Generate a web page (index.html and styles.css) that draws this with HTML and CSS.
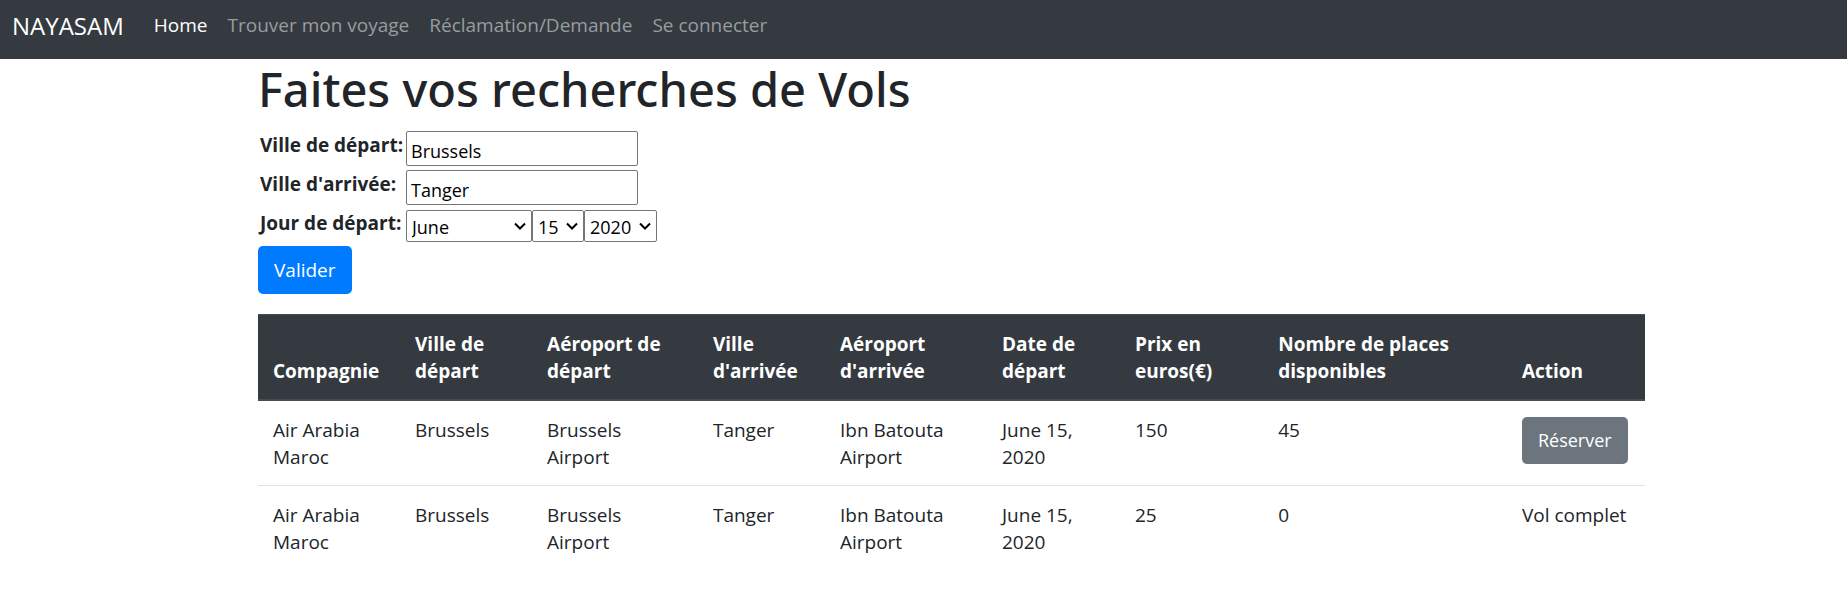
FILE: index.html
```html
<!DOCTYPE html>
<html lang="fr">
<head>
<meta charset="utf-8">
<meta name="viewport" content="width=device-width, initial-scale=1">
<title>NAYASAM</title>
<link rel="stylesheet" href="styles.css">
</head>
<body>
<nav class="navbar">
  <a class="brand" href="#">NAYASAM</a>
  <ul class="nav-list">
    <li><a class="nav-link active" href="#">Home</a></li>
    <li><a class="nav-link" href="#">Trouver mon voyage</a></li>
    <li><a class="nav-link" href="#">Réclamation/Demande</a></li>
    <li><a class="nav-link" href="#">Se connecter</a></li>
  </ul>
</nav>
<main class="content">
  <h1 class="title">Faites vos recherches de Vols</h1>
  <form class="search">
    <div class="fields">
      <label class="label" for="from">Ville de départ:</label>
      <input class="text-input" id="from" type="text" value="Brussels">
      <label class="label" for="to">Ville d'arrivée:</label>
      <input class="text-input" id="to" type="text" value="Tanger">
      <label class="label" for="month">Jour de départ:</label>
      <div class="date">
        <span class="picker"><select class="select month" id="month"><option>June</option></select><svg class="chevron" viewBox="0 0 12 8"><path d="M1 1.5l5 5 5-5"/></svg></span>
        <span class="picker"><select class="select day" aria-label="Jour"><option>15</option></select><svg class="chevron" viewBox="0 0 12 8"><path d="M1 1.5l5 5 5-5"/></svg></span>
        <span class="picker"><select class="select year" aria-label="Année"><option>2020</option></select><svg class="chevron" viewBox="0 0 12 8"><path d="M1 1.5l5 5 5-5"/></svg></span>
      </div>
    </div>
    <button class="btn btn-primary" type="button">Valider</button>
  </form>
  <table class="flights">
    <colgroup>
      <col class="c-company"><col class="c-from"><col class="c-from-airport"><col class="c-to"><col class="c-to-airport"><col class="c-date"><col class="c-price"><col class="c-seats"><col class="c-action">
    </colgroup>
    <thead>
      <tr>
        <th scope="col">Compagnie</th>
        <th scope="col">Ville de<br>départ</th>
        <th scope="col">Aéroport de<br>départ</th>
        <th scope="col">Ville<br>d'arrivée</th>
        <th scope="col">Aéroport<br>d'arrivée</th>
        <th scope="col">Date de<br>départ</th>
        <th scope="col">Prix en<br>euros(€)</th>
        <th scope="col">Nombre de places<br>disponibles</th>
        <th scope="col">Action</th>
      </tr>
    </thead>
    <tbody>
      <tr>
        <td>Air Arabia<br>Maroc</td>
        <td>Brussels</td>
        <td>Brussels<br>Airport</td>
        <td>Tanger</td>
        <td>Ibn Batouta<br>Airport</td>
        <td>June 15,<br>2020</td>
        <td>150</td>
        <td>45</td>
        <td><button class="btn btn-secondary" type="button">Réserver</button></td>
      </tr>
      <tr>
        <td>Air Arabia<br>Maroc</td>
        <td>Brussels</td>
        <td>Brussels<br>Airport</td>
        <td>Tanger</td>
        <td>Ibn Batouta<br>Airport</td>
        <td>June 15,<br>2020</td>
        <td>25</td>
        <td>0</td>
        <td>Vol complet</td>
      </tr>
    </tbody>
  </table>
</main>
</body>
</html>
```
FILE: styles.css
```css
*, *::before, *::after { box-sizing: border-box; }

body {
  margin: 0;
  background: #fff;
  color: #212529;
  font-family: "Segoe UI", "Open Sans", "Noto Sans", sans-serif;
  font-size: 19px;
  line-height: 27px;
}

.navbar {
  display: flex;
  align-items: flex-start;
  gap: 20px;
  height: 59px;
  padding: 8px 12px;
  background: #343a40;
}

.brand {
  color: #fff;
  font-size: 24px;
  line-height: 36px;
  text-decoration: none;
}

.nav-list {
  display: flex;
  margin: 0;
  padding: 0;
  list-style: none;
}

.nav-link {
  display: block;
  padding: 4px 10px;
  color: #999c9f;
  text-decoration: none;
}

.nav-link.active { color: #fff; }

.content { padding: 0 202px 0 258px; }

.title {
  margin: 0;
  padding-bottom: 12px;
  font-family: "Noto Sans", sans-serif;
  font-size: 47px;
  font-weight: 500;
  line-height: 60px;
}

.search { margin: 0 0 20px; }

.fields {
  display: grid;
  grid-template-columns: 146px 1fr;
  column-gap: 2px;
  row-gap: 4px;
  padding-bottom: 4px;
}

.label {
  padding: 1px 0 0 2px;
  font-weight: 700;
  white-space: nowrap;
}

.text-input {
  width: 232px;
  height: 35px;
  padding: 4px 4px 0;
  border: 1px solid #767676;
  border-radius: 2px;
  background: #fff;
  color: #000;
  font: inherit;
  font-size: 18px;
}

.date {
  display: flex;
  padding-top: 1px;
}

.picker {
  position: relative;
  display: inline-flex;
}

.select {
  height: 32px;
  padding: 2px 5px 0;
  border: 1px solid #767676;
  border-radius: 2px;
  appearance: none;
  background: #fff;
  color: #000;
  font: inherit;
  font-size: 18px;
}

.month { width: 126px; }
.day { width: 52px; }
.year { width: 73px; }

.chevron {
  position: absolute;
  top: 12px;
  right: 6px;
  width: 12px;
  height: 8px;
  fill: none;
  stroke: #000;
  stroke-width: 2;
  pointer-events: none;
}

.btn {
  display: block;
  height: 47px;
  padding: 0 16px;
  border: 0;
  border-radius: 5px;
  color: #fff;
  font: inherit;
}

.btn-primary {
  height: 48px;
  background: #007bff;
}

.btn-secondary {
  background: #6c757d;
  font-size: 18px;
}

.flights {
  width: 100%;
  border-collapse: collapse;
  table-layout: fixed;
}

.c-company { width: 10.24%; }
.c-from { width: 9.52%; }
.c-from-airport { width: 11.96%; }
.c-to { width: 9.16%; }
.c-to-airport { width: 11.68%; }
.c-date { width: 9.59%; }
.c-price { width: 10.33%; }
.c-seats { width: 17.57%; }
.c-action { width: 9.95%; }

.flights th,
.flights td {
  padding: 16px 0 14px 15px;
  text-align: left;
  white-space: nowrap;
}

.flights th {
  border-top: 1px solid #454d55;
  border-bottom: 2px solid #454d55;
  background: #343a40;
  color: #fff;
  font-weight: 700;
  vertical-align: bottom;
}

.flights td {
  border-top: 1px solid #dee2e6;
  vertical-align: top;
}
```
